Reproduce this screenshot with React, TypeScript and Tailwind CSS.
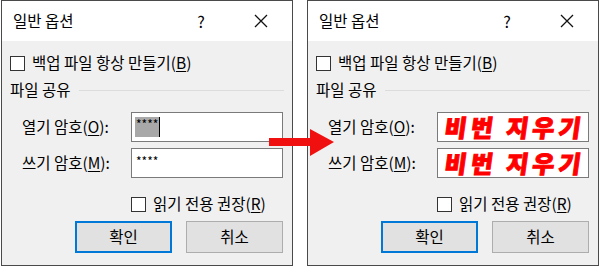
const font = { fontFamily: '"Noto Sans CJK KR", "Noto Sans", sans-serif' };

function Check({ label, hot }: { label: string; hot: string }) {
  return (
    <div className="flex items-center h-[20px]">
      <span className="w-[15px] h-[15px] border border-[#333] bg-white shrink-0" />
      <span className="ml-[7px] text-[15.5px] leading-none text-black">
        {label}(<span className="underline underline-offset-2">{hot}</span>)
      </span>
    </div>
  );
}

function PasswordBox({ cleared, selected }: { cleared: boolean; selected?: boolean }) {
  return (
    <div className="w-[152px] h-[30px] border border-[#7a7a7a] bg-white flex items-center px-[3px]">
      {cleared ? (
        <span className="text-[24px] leading-[26px] font-black text-[#ff0000] -skew-x-[8deg] tracking-[4px] pl-[4px] whitespace-nowrap [-webkit-text-stroke:1px_#ff0000]">
          비번 지우기
        </span>
      ) : selected ? (
        <div className="flex items-stretch h-[20px]">
          <span className="bg-[#a8a8a8] text-[12px] leading-[14px] px-[1px] text-black">****</span>
          <span className="w-[1px] bg-black" />
        </div>
      ) : (
        <span className="text-[12px] leading-[16px] self-start mt-[4px] pl-[1px] text-black">****</span>
      )}
    </div>
  );
}

function Dialog({ cleared }: { cleared: boolean }) {
  return (
    <div className="w-[292px] h-[266px] border border-[#4a4a4a] flex flex-col bg-[#f0f0f0]">
      <div className="h-[40px] bg-white flex items-center pl-[11px] pr-[16px] shrink-0">
        <span className="flex-1 text-[15.5px] text-black">일반 옵션</span>
        <span className="w-[30px] text-center text-[16px] text-black">?</span>
        <span className="w-[30px] ml-[30px] flex justify-center">
          <svg width="14" height="14" viewBox="0 0 14 14">
            <path d="M1 1 L13 13 M13 1 L1 13" stroke="#111" strokeWidth="1.3" />
          </svg>
        </span>
      </div>
      <div className="flex-1 flex flex-col px-[8px] pt-[12px]">
        <Check label="백업 파일 항상 만들기" hot="B" />
        <div className="flex items-center h-[20px] mt-[7px]">
          <span className="text-[15.5px] leading-none text-black">파일 공유</span>
          <span className="flex-1 h-[1px] bg-[#dcdcdc] ml-[8px]" />
        </div>
        <div className="flex items-center mt-[12px]">
          <span className="w-[121px] pl-[12px] text-[15.5px] leading-none text-black">
            열기 암호(<span className="underline underline-offset-2">O</span>):
          </span>
          <PasswordBox cleared={cleared} selected />
        </div>
        <div className="flex items-center mt-[6px]">
          <span className="w-[121px] pl-[12px] text-[15.5px] leading-none text-black">
            쓰기 암호(<span className="underline underline-offset-2">M</span>):
          </span>
          <PasswordBox cleared={cleared} />
        </div>
        <div className="ml-[121px] mt-[16px]">
          <Check label="읽기 전용 권장" hot="R" />
        </div>
        <div className="flex justify-end gap-[14px] mt-[7px] mr-[1px]">
          <button type="button" className="w-[97px] h-[32px] border-2 border-[#0078d7] bg-[#e1e1e1] text-[15.5px] text-black">
            확인
          </button>
          <button type="button" className="w-[97px] h-[32px] border border-[#adadad] bg-[#e1e1e1] text-[15.5px] text-black">
            취소
          </button>
        </div>
      </div>
    </div>
  );
}

export default function App() {
  return (
    <div className="relative w-[600px] h-[268px] bg-white flex pl-[1px] gap-[14px]" style={font}>
      <Dialog cleared={false} />
      <Dialog cleared />
      <svg className="absolute left-[266px] top-[126px]" width="70" height="32" viewBox="0 0 70 32">
        <rect x="3" y="12" width="43" height="8" fill="#f01010" />
        <polygon points="44,3 68,16 44,30" fill="#f01010" />
      </svg>
    </div>
  );
}
